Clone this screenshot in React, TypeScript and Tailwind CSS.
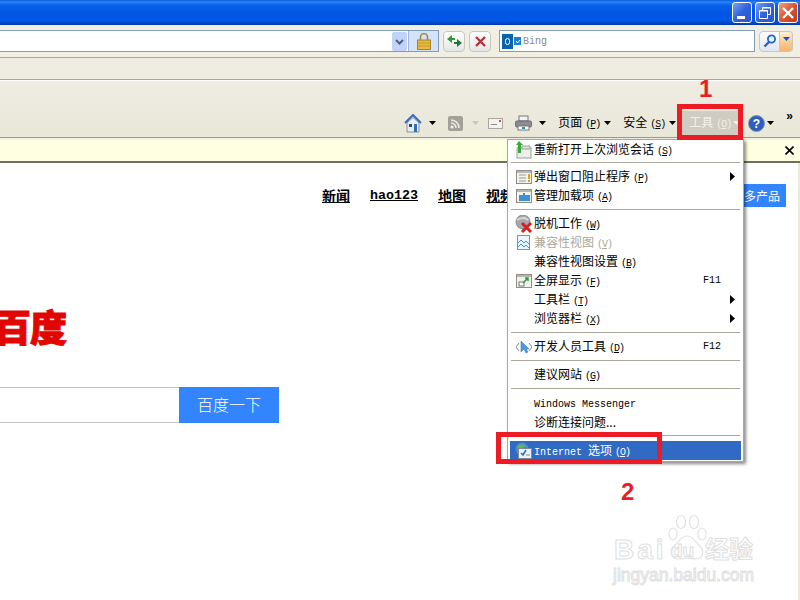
import React from "react";

const Mn = ({ c }: { c: string }) => (
  <span className="font-['Liberation_Mono',monospace] text-[10px] ml-[3px] tracking-[-1px]">
    (<span className="underline">{c}</span>)
  </span>
);

const Caret = ({ color = "#000" }: { color?: string }) => (
  <svg width="7" height="4" viewBox="0 0 7 4" className="shrink-0 block"><path d="M0 0h7L3.5 4z" fill={color} /></svg>
);

const WinBtn = ({ red, children }: { red?: boolean; children: React.ReactNode }) => (
  <div
    className={
      "w-[20px] h-[21px] rounded-[3px] border border-white flex items-center justify-center " +
      (red
        ? "bg-gradient-to-br from-[#e8a088] via-[#d9562c] to-[#c63a12]"
        : "bg-gradient-to-br from-[#7b9ff0] via-[#2f62dc] to-[#2a55d0]")
    }
  >
    {children}
  </div>
);

const HomeIcon = () => (
  <svg width="18" height="19" viewBox="0 0 18 19" className="block">
    <path d="M1 9 9 1l8 8" fill="none" stroke="#3a6cb8" strokeWidth="2" />
    <path d="M3 9 9 3.5 15 9v9H3z" fill="#e9eef5" stroke="#7f93ad" />
    <rect x="5" y="10" width="3" height="3" fill="#28486f" />
    <rect x="10" y="10" width="3" height="8" fill="#2f6fb5" />
  </svg>
);
const RssIcon = () => (
  <svg width="15" height="15" viewBox="0 0 15 15" className="block">
    <rect width="15" height="15" rx="2" fill="#a3a197" />
    <circle cx="4" cy="11" r="1.6" fill="#eee" />
    <path d="M3 7a5 5 0 0 1 5 5M3 4a8 8 0 0 1 8 8" stroke="#eee" strokeWidth="1.5" fill="none" />
  </svg>
);
const MailIcon = () => (
  <svg width="15" height="11" viewBox="0 0 15 11" className="block">
    <rect x=".5" y=".5" width="14" height="10" fill="#f4f3ee" stroke="#a9a8a0" />
    <rect x="11" y="2" width="2" height="2" fill="#d84a4a" />
    <rect x="3" y="6" width="6" height="1" fill="#8d8d8d" />
  </svg>
);
const PrintIcon = () => (
  <svg width="17" height="16" viewBox="0 0 17 16" className="block">
    <rect x="4" y="1" width="9" height="5" fill="#f3f3f3" stroke="#777" />
    <rect x=".5" y="6" width="16" height="6" rx="1.5" fill="#8a8d93" stroke="#666" />
    <rect x="3" y="11" width="11" height="4" fill="#fff" stroke="#777" />
    <rect x="7" y="12" width="3" height="2" fill="#3a8fc2" />
  </svg>
);
const HelpIcon = () => (
  <svg width="17" height="17" viewBox="0 0 17 17" className="block">
    <circle cx="8.5" cy="8.5" r="8" fill="#2c5fc0" stroke="#8b95a8" />
    <text x="8.5" y="13" textAnchor="middle" fontSize="12" fontWeight="bold" fill="#fff" fontFamily="Liberation Sans">?</text>
  </svg>
);

const I = {
  reopen: (
    <svg width="17" height="18" viewBox="0 0 17 18">
      <rect x="2" y="7" width="14" height="10" fill="#eef0ea" stroke="#9aa0a0" />
      <path d="M7 5h8v3H7z" fill="#dfe3dc" stroke="#9aa0a0" />
      <path d="M4 0 1 4h2v8h3V4h2z" fill="#38a838" />
    </svg>
  ),
  popup: (
    <svg width="16" height="14" viewBox="0 0 16 14">
      <rect x=".5" y=".5" width="15" height="13" fill="#f4f3ec" stroke="#8f8f88" />
      <rect x="1" y="1" width="14" height="2" fill="#b8b8ae" />
      <path d="M3 5h7M3 8h7M3 11h7" stroke="#999" />
      <rect x="12" y="4" width="2" height="5" fill="#e89b1c" />
      <rect x="12" y="10" width="2" height="2" fill="#e89b1c" />
    </svg>
  ),
  addon: (
    <svg width="16" height="14" viewBox="0 0 16 14">
      <rect x=".5" y=".5" width="15" height="13" fill="#f4f3ec" stroke="#8f8f88" />
      <rect x="1" y="1" width="14" height="2" fill="#b8b8ae" />
      <path d="M3 6h4V4h2v2h5v6H3z" fill="#3e8fd6" />
    </svg>
  ),
  offline: (
    <svg width="18" height="18" viewBox="0 0 18 18">
      <circle cx="8" cy="7" r="7" fill="#a7a7a7" stroke="#8a8a8a" />
      <path d="M2 5c3-2 8-3 11 0" stroke="#d8d8d8" strokeWidth="2" fill="none" />
      <path d="m7 8 9 9M16 8l-9 9" stroke="#d81e1e" strokeWidth="3" />
    </svg>
  ),
  compat: (
    <svg width="13" height="15" viewBox="0 0 13 15">
      <rect x=".5" y=".5" width="12" height="14" fill="#eef6fd" stroke="#5b9bd8" />
      <path d="m1 8 3-3 3 3 2-2 3 3M1 12l3-3 3 3 2-2 3 3" stroke="#4a90d8" fill="none" />
    </svg>
  ),
  full: (
    <svg width="16" height="14" viewBox="0 0 16 14">
      <rect x=".5" y=".5" width="15" height="13" fill="#f2f2ea" stroke="#8f8f88" />
      <rect x="1" y="1" width="14" height="2" fill="#b8b8ae" />
      <rect x="3" y="8" width="5" height="4" fill="#fff" stroke="#777" />
      <path d="m7 9 5-5M9 4h3v3" stroke="#2a9a3a" strokeWidth="1.5" fill="none" />
    </svg>
  ),
  dev: (
    <svg width="18" height="14" viewBox="0 0 18 14">
      <path d="M4 3 1 7l3 4M14 3l3 4-3 4" stroke="#8a8a8a" fill="none" />
      <path d="M6 1v11l3-3 2 4 2-1-2-3h3z" fill="#4a9be0" stroke="#2a6fb0" strokeWidth=".5" />
    </svg>
  ),
  options: (
    <svg width="17" height="17" viewBox="0 0 17 17">
      <circle cx="7" cy="7" r="6.5" fill="#4a90c8" />
      <path d="M3 4c2-2 6-2 7 0-2 2-4 3-7 3z" fill="#5cb85c" />
      <rect x="3.5" y="6.5" width="13" height="10" fill="#eef2f6" stroke="#7a8a9a" />
      <path d="m6 11 2 2 3-5" stroke="#1f6fc0" strokeWidth="1.5" fill="none" />
      <path d="M11 13h4" stroke="#888" />
    </svg>
  ),
};

const Sep = ({ h, at }: { h: string; at: string }) => (
  <div className={h + " " + at + " px-[3px]"}>
    <div className="h-px bg-[#aca899]" />
  </div>
);

const Row = ({
  icon, label, mn, right, arrow, disabled, hi, children,
}: {
  icon?: React.ReactNode; label?: string; mn?: string; right?: string; arrow?: boolean; disabled?: boolean; hi?: boolean; children?: React.ReactNode;
}) => (
  <div className={"h-[19px] mx-[2px] flex items-center " + (hi ? "bg-[#316ac5] text-white " : "") + (disabled ? "text-[#aca899]" : "")}>
    <div className="w-[24px] pl-[3px] flex justify-center items-center shrink-0">{icon}</div>
    <div className="flex-1 whitespace-nowrap leading-none">
      {children}
      {label}
      {mn && <Mn c={mn} />}
    </div>
    {right && <span className="font-['Liberation_Mono',monospace] text-[10px] mr-[20px]">{right}</span>}
    {arrow && (
      <svg width="5" height="9" viewBox="0 0 5 9" className="mr-[6px]"><path d="M0 0l5 4.5L0 9z" fill="#000" /></svg>
    )}
  </div>
);

const ToolText = ({ t, mn }: { t: string; mn: string }) => (
  <span className="block text-[12px] leading-none whitespace-nowrap">{t}<Mn c={mn} /></span>
);

export default function App() {
  return (
    <div className="relative w-[800px] h-[600px] overflow-hidden bg-white text-[12px] text-black font-['Noto_Sans_CJK_SC',sans-serif]">
      {/* title bar */}
      <div className="h-[25px] flex justify-end items-center gap-[3px] pr-[2px] bg-[linear-gradient(to_bottom,#0a5de0_0,#2c82f4_2px,#0a62e8_5px,#0055e4_14px,#0058e8_20px,#0048c8_23px,#0038a8_25px)]">
        <WinBtn><div className="w-[8px] h-[3px] bg-white mt-[9px] -ml-[2px]" /></WinBtn>
        <WinBtn>
          <svg width="12" height="12" viewBox="0 0 12 12"><path d="M3.5 3V.5h8v7H9M.5 3.5h8v8h-8z" fill="none" stroke="#fff" /><path d="M.5 4h8M3.5 1h8" stroke="#fff" strokeWidth="1" /></svg>
        </WinBtn>
        <WinBtn red>
          <svg width="12" height="12" viewBox="0 0 12 12"><path d="m1 1 10 10M11 1 1 11" stroke="#fff" strokeWidth="2.4" /></svg>
        </WinBtn>
      </div>

      {/* address row */}
      <div className="h-[32px] bg-[#f1efe3] flex items-center pr-[7px] pb-[5px] pt-[5px]">
        <div className="flex-1 h-[22px] border-y border-r border-[#7f9db9] bg-white flex justify-end">
          <div className="w-[15px] h-[19px] mt-px bg-[#c1d3fb] rounded-[2px] flex items-center justify-center">
            <svg width="9" height="6" viewBox="0 0 9 6"><path d="m1 1 3.5 3.5L8 1" fill="none" stroke="#4d6185" strokeWidth="2" /></svg>
          </div>
          <div className="w-[30px] ml-px bg-[#d3e3fb] flex items-center justify-center border-l border-[#9db5d8]">
            <svg width="14" height="17" viewBox="0 0 14 17">
              <path d="M3.5 7V4a3.5 3.5 0 0 1 7 0v3" fill="none" stroke="#a68a3a" strokeWidth="1.6" />
              <rect x=".5" y="7" width="13" height="9.5" fill="#e8b93f" stroke="#a8842a" />
              <path d="M1 10h12M1 13h12" stroke="#c79a2c" />
            </svg>
          </div>
        </div>
        <div className="ml-[4px] w-[22px] h-[21px] rounded-[4px] border border-[#c8c8c0] bg-gradient-to-b from-white to-[#e4e6e4] flex items-center justify-center">
          <svg width="15" height="12" viewBox="0 0 15 12">
            <path d="M5 0v3h3v2H5v3L0 4z" fill="#2f9a3a" />
            <path d="M10 12V9H7V7h3V4l5 4z" fill="#1f7a30" />
          </svg>
        </div>
        <div className="ml-[4px] w-[22px] h-[21px] rounded-[4px] border border-[#c8c8c0] bg-gradient-to-b from-white to-[#e4e6e4] flex items-center justify-center">
          <svg width="11" height="11" viewBox="0 0 11 11"><path d="m1 1 9 9M10 1l-9 9" stroke="#b0333c" strokeWidth="2.4" /></svg>
        </div>
        <div className="ml-[8px] w-[256px] h-[22px] border border-[#7f9db9] bg-white flex items-center pl-[2px]">
          <div className="w-[11px] h-[15px] bg-[#0a64ad] flex items-center justify-center">
            <div className="w-[5px] h-[7px] rounded-full border-[1.5px] border-white" />
          </div>
          <div className="ml-px w-[7px] h-[8px] bg-[#1a7fd0] flex items-center justify-center">
            <svg width="6" height="5" viewBox="0 0 6 5"><path d="m1 2 1.5 2L5 1" stroke="#fff" fill="none" /></svg>
          </div>
          <span className="ml-[2px] font-['Liberation_Mono',monospace] text-[10px] text-[#8a8a82]">Bing</span>
        </div>
        <div className="ml-[4px] w-[21px] h-[21px] rounded-l-[4px] border border-[#c8c8c0] bg-gradient-to-b from-white to-[#dfe6f0] flex items-center justify-center">
          <svg width="14" height="14" viewBox="0 0 14 14"><circle cx="8.5" cy="5" r="3.6" fill="#eaf3fd" stroke="#2266cc" strokeWidth="1.8" /><path d="M6 8 1.5 12.5" stroke="#2266cc" strokeWidth="2.4" /></svg>
        </div>
        <div className="w-[13px] h-[21px] rounded-r-[4px] border-y border-r border-[#c8c8c0] bg-gradient-to-b from-[#fdf0d8] via-[#fbcf96] to-[#f8b470] flex items-start justify-center pt-[5px]">
          <Caret color="#1c4fc0" />
        </div>
      </div>

      {/* favorites row */}
      <div className="h-[23px] border-y border-[#aca899] bg-[#efede2]" />

      {/* command row */}
      <div className="h-[58px] border-t border-white border-b border-b-[#8a9bb0] bg-gradient-to-b from-[#efede3] to-[#e9e7d8] flex items-end justify-end pb-[2px] pr-[7px]">
        <div className="flex items-center h-[24px]">
          <HomeIcon />
          <div className="ml-[7px]"><Caret /></div>
          <div className="ml-[12px]"><RssIcon /></div>
          <div className="ml-[9px]"><Caret color="#c8c6b8" /></div>
          <div className="ml-[9px]"><MailIcon /></div>
          <div className="ml-[12px]"><PrintIcon /></div>
          <div className="ml-[7px]"><Caret /></div>
          <div className="ml-[12px]"><ToolText t="页面" mn="P" /></div>
          <div className="ml-[4px]"><Caret /></div>
          <div className="ml-[12px]"><ToolText t="安全" mn="S" /></div>
          <div className="ml-[4px]"><Caret /></div>
          <div className="ml-[6px] w-[56px] h-[24px] bg-[#cfcdc1] text-[#f2f1ea] flex items-center pl-[7px] gap-[2px]">
            <ToolText t="工具" mn="O" />
            <Caret color="#f2f1ea" />
          </div>
          <div className="ml-[10px]"><HelpIcon /></div>
          <div className="ml-[2px]"><Caret /></div>
          <div className="ml-[12px] mb-[14px] font-['Liberation_Sans',sans-serif] font-bold text-[12px] leading-none">»</div>
        </div>
      </div>

      {/* info bar */}
      <div className="h-[25px] pt-[2px] bg-[#f2f1e6]">
        <div className="h-[21px] bg-[#ffffe1] flex justify-end items-center pr-[6px]">
          <svg width="9" height="9" viewBox="0 0 9 9"><path d="m.5.5 8 8M8.5.5l-8 8" stroke="#000" strokeWidth="1.6" /></svg>
        </div>
        <div className="h-[2px] bg-[#716f64]" />
      </div>

      {/* page */}
      <div className="h-[437px] border-r-2 border-[#ece9d8] bg-white flex flex-col">
        <div className="mt-[21px] h-[23px] flex items-center pl-[322px] pr-[12px] gap-[20px] font-semibold text-[14px]">
          <span className="underline">新闻</span>
          <span className="underline font-['Liberation_Mono',monospace] font-bold text-[13.33px]">hao123</span>
          <span className="underline">地图</span>
          <span className="underline">视频</span>
          <div className="ml-auto w-[60px] h-[23px] bg-[#3385ff] text-white font-normal text-[12px] flex items-center justify-end pr-[6px]">更多产品</div>
        </div>
        <div className="mt-[95px] w-[66px] h-[48px] flex justify-end items-center">
          <span className="shrink-0 font-black text-[#e10601] text-[37px] leading-none tracking-[-1px] whitespace-nowrap [-webkit-text-stroke:1px_#e10601]">百度</span>
        </div>
        <div className="mt-[37px] flex w-[279px] h-[36px]">
          <div className="flex-1 border-y border-[#c4c4c4] bg-white h-[36px]" />
          <div className="w-[100px] bg-[#3385ff] text-white text-[16px] font-light flex items-center justify-center pb-[3px]">百度一下</div>
        </div>
      </div>

      {/* tools menu */}
      <div className="absolute left-[507px] top-[139px] w-[237px] h-[323px] border border-[#aca899] bg-white shadow-[2px_2px_3px_rgba(0,0,0,0.45)]">
        <Row icon={I.reopen} label="重新打开上次浏览会话" mn="S" />
        <Sep h="h-[8px]" at="pt-[3px]" />
        <Row icon={I.popup} label="弹出窗口阻止程序" mn="P" arrow />
        <Row icon={I.addon} label="管理加载项" mn="A" />
        <Sep h="h-[9px]" at="pt-[4px]" />
        <Row icon={I.offline} label="脱机工作" mn="W" />
        <Row icon={I.compat} label="兼容性视图" mn="V" disabled />
        <Row label="兼容性视图设置" mn="B" />
        <Row icon={I.full} label="全屏显示" mn="F" right="F11" />
        <Row label="工具栏" mn="T" arrow />
        <Row label="浏览器栏" mn="X" arrow />
        <Sep h="h-[9px]" at="pt-[4px]" />
        <Row icon={I.dev} label="开发人员工具" mn="D" right="F12" />
        <Sep h="h-[9px]" at="pt-[4px]" />
        <Row label="建议网站" mn="G" />
        <Sep h="h-[9px]" at="pt-[4px]" />
        <Row><span className="font-['Liberation_Mono',monospace] text-[10px]">Windows Messenger</span></Row>
        <Row label="诊断连接问题..." />
        <Sep h="h-[10px]" at="pt-[4px]" />
        <Row hi icon={I.options}>
          <span className="font-['Liberation_Mono',monospace] text-[10px]">Internet</span>
          <span className="ml-[6px]">选项</span>
          <Mn c="O" />
        </Row>
      </div>

      {/* annotations */}
      <div className="absolute left-[677px] top-[104px] w-[66px] h-[36px] border-[5px] border-[#ed1c24]" />
      <div className="absolute left-[496px] top-[432px] w-[166px] h-[32px] border-[5px] border-[#ed1c24]" />
      <div className="absolute left-[699px] top-[76px] font-['Liberation_Sans',sans-serif] font-bold text-[24px] leading-[26px] text-[#ed1c24]">1</div>
      <div className="absolute left-[621px] top-[479px] font-['Liberation_Sans',sans-serif] font-bold text-[24px] leading-[26px] text-[#ed1c24]">2</div>

      {/* watermark */}
      <div className="absolute left-[612px] top-[512px] w-[146px] h-[74px] text-white [-webkit-text-stroke:1px_#e0e0e0] font-['Liberation_Sans',sans-serif] font-bold">
        <svg width="48" height="50" viewBox="0 0 48 50" className="absolute left-[50px] top-[2px]" fill="#fff" stroke="#e2e2e2" strokeWidth="1.2">
          <ellipse cx="11" cy="20" rx="4" ry="6" />
          <ellipse cx="19" cy="8" rx="4.5" ry="6.5" />
          <ellipse cx="32" cy="8" rx="4.5" ry="6.5" />
          <ellipse cx="40" cy="20" rx="4" ry="6" />
          <path d="M25 22c6 0 8 6 13 10 5 5 3 13-4 13-4 0-6-1-9-1s-5 1-9 1c-7 0-9-8-4-13 5-4 7-10 13-10z" />
        </svg>
        <div className="absolute left-[2px] top-[23px] text-[28px] leading-[30px] tracking-[3px]">Bai</div>
        <div className="absolute left-[59px] top-[29px] text-[19px] leading-[20px]">du</div>
        <div className="absolute left-[93px] top-[22px] text-[24px] leading-[28px] font-['Noto_Sans_CJK_SC',sans-serif]">经验</div>
        <div className="absolute left-[1px] top-[52px] text-[17.5px] leading-[22px] font-normal whitespace-nowrap">jingyan.baidu.com</div>
      </div>
    </div>
  );
}
